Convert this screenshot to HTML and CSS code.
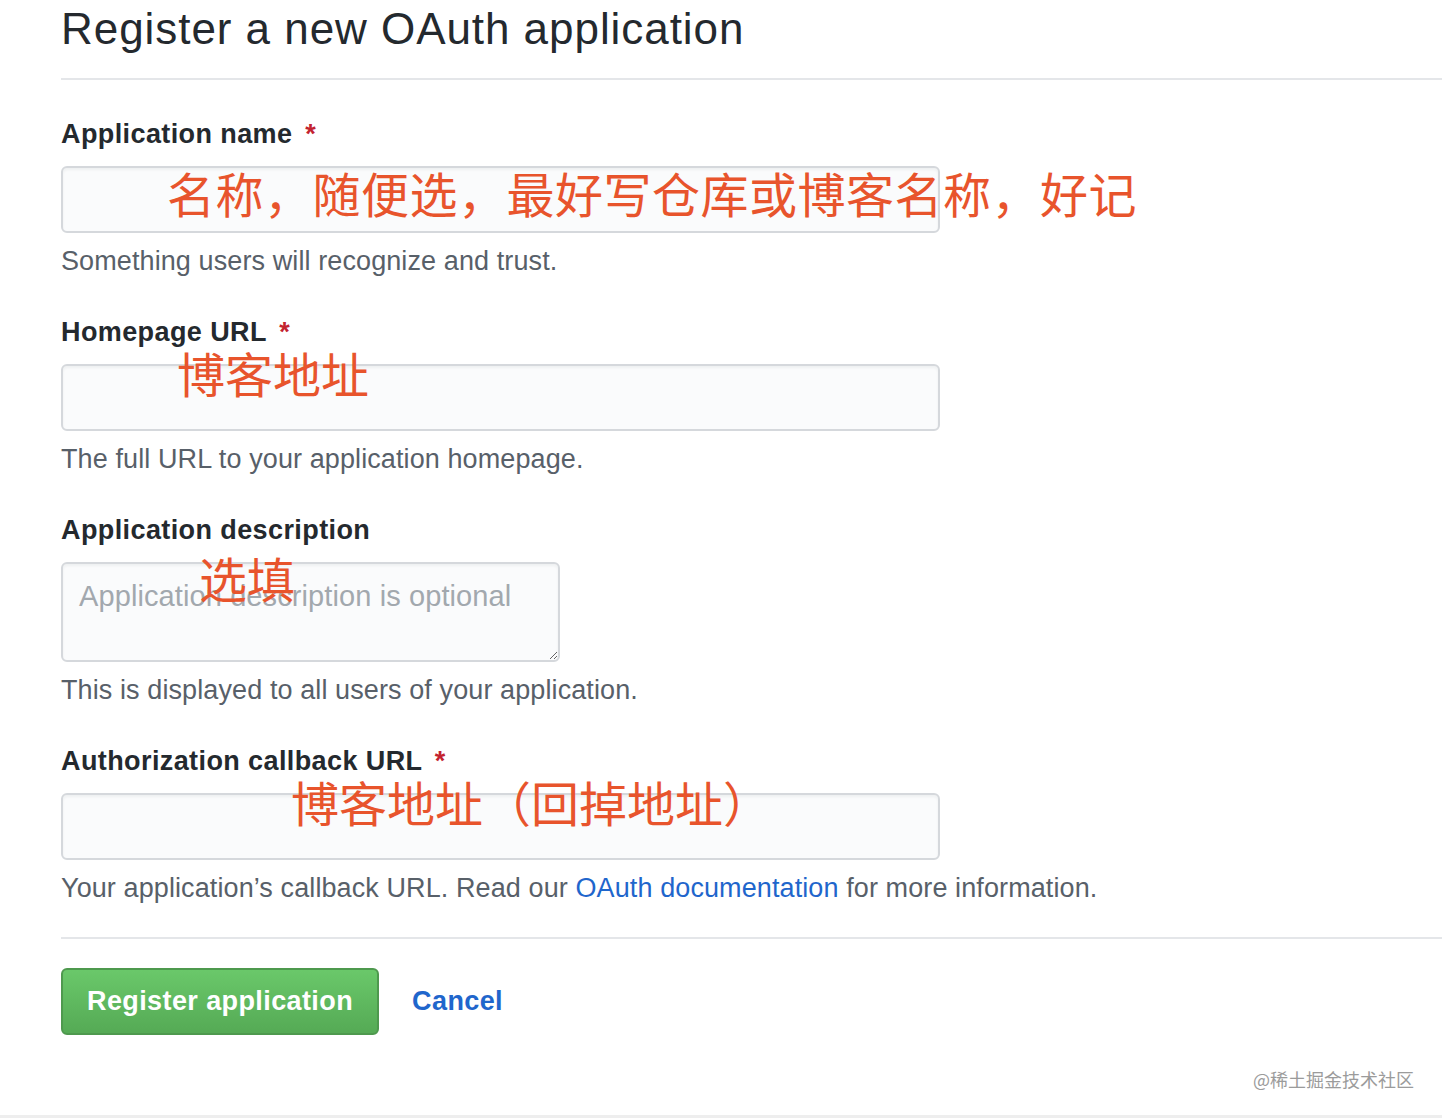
FILE: index.html
```html
<!DOCTYPE html>
<html lang="en">
<head>
<meta charset="utf-8">
<title>Register a new OAuth application</title>
<link rel="stylesheet" href="styles.css">
</head>
<body>
<div class="page">
  <main class="main">
    <h1 class="title">Register a new OAuth application</h1>
    <div class="rule"></div>
    <form class="form">
      <div class="field">
        <label class="label">Application name <span class="req">*</span></label>
        <div class="control">
          <input class="input" type="text">
          <span class="anno anno-1">名称，随便选，最好写仓库或博客名称，好记</span>
        </div>
        <p class="note">Something users will recognize and trust.</p>
      </div>
      <div class="field">
        <label class="label">Homepage URL <span class="req">*</span></label>
        <div class="control">
          <input class="input" type="text">
          <span class="anno anno-2">博客地址</span>
        </div>
        <p class="note">The full URL to your application homepage.</p>
      </div>
      <div class="field">
        <label class="label">Application description</label>
        <div class="control">
          <textarea class="textarea" placeholder="Application description is optional"></textarea>
          <span class="anno anno-3">选填</span>
        </div>
        <p class="note">This is displayed to all users of your application.</p>
      </div>
      <div class="field">
        <label class="label">Authorization callback URL <span class="req">*</span></label>
        <div class="control">
          <input class="input" type="text">
          <span class="anno anno-4">博客地址（回掉地址）</span>
        </div>
        <p class="note">Your application’s callback URL. Read our <a class="link" href="#">OAuth documentation</a> for more information.</p>
      </div>
      <div class="rule form-rule"></div>
      <div class="actions">
        <button class="btn" type="button">Register application</button>
        <a class="cancel" href="#">Cancel</a>
      </div>
    </form>
  </main>
  <div class="band"></div>
  <span class="watermark">@稀土掘金技术社区</span>
</div>
</body>
</html>
```

FILE: styles.css
```css
html, body {
  margin: 0;
  padding: 0;
  background: #ffffff;
}

body {
  font-family: "Liberation Sans", Arial, sans-serif;
  color: #24292e;
  overflow: hidden;
}

.page {
  position: relative;
  min-height: 1118px;
  box-sizing: border-box;
  display: flex;
  flex-direction: column;
}

.main {
  padding: 3px 0 0 61px;
}

.title {
  margin: 0;
  font-size: 44px;
  line-height: 52px;
  font-weight: 400;
  letter-spacing: 0.95px;
  color: #24292e;
}

.rule {
  height: 2px;
  background: #e4e6e9;
  margin-top: 23px;
}

.form {
  margin: 36px 0 0;
}

.field + .field {
  margin-top: 35px;
}

.label {
  display: block;
  font-size: 27px;
  line-height: 36px;
  font-weight: 700;
  letter-spacing: 0.4px;
  color: #24292e;
}

.req {
  color: #c3232f;
  margin-left: 5px;
}

.control {
  position: relative;
  margin-top: 14px;
  width: 879px;
  height: 67px;
}

.field:nth-child(3) .control {
  width: 499px;
  height: 100px;
}

.input,
.textarea {
  display: block;
  box-sizing: border-box;
  border: 2px solid #d5d8dc;
  border-radius: 6px;
  background: #fafbfc;
  box-shadow: inset 0 2px 3px rgba(27, 31, 35, 0.05);
  margin: 0;
  outline: none;
}

.input {
  width: 879px;
  height: 67px;
}

.textarea {
  width: 499px;
  height: 100px;
  padding: 14px 16px;
  font-family: "Liberation Sans", Arial, sans-serif;
  font-size: 29px;
  line-height: 36px;
  letter-spacing: 0.1px;
  color: #24292e;
  resize: vertical;
}

.textarea::placeholder {
  color: #a2a8ae;
}

.note {
  margin: 10px 0 0;
  font-size: 27px;
  line-height: 36px;
  letter-spacing: 0.1px;
  color: #586069;
}

.link {
  color: #1f66cc;
  text-decoration: none;
}

.anno {
  position: absolute;
  white-space: nowrap;
  font-family: "Noto Sans CJK SC", "Noto Sans", sans-serif;
  font-size: 48px;
  line-height: 48px;
  color: #e8542c;
  pointer-events: none;
}

.anno-1 {
  left: 106px;
  top: 2px;
  letter-spacing: 0.5px;
}

.anno-2 {
  left: 116px;
  top: -16px;
}

.anno-3 {
  left: 138px;
  top: -9px;
}

.anno-4 {
  left: 230px;
  top: -16px;
}

.form-rule {
  margin-top: 31px;
}

.actions {
  margin-top: 29px;
  display: flex;
  align-items: center;
  gap: 33px;
}

.btn {
  box-sizing: border-box;
  height: 67px;
  padding: 0 24px;
  border: 2px solid #4e994e;
  border-radius: 6px;
  background: linear-gradient(180deg, #6ac86a 0%, #55aa55 100%);
  color: #ffffff;
  font-family: "Liberation Sans", Arial, sans-serif;
  font-size: 27px;
  font-weight: 700;
  letter-spacing: 0.4px;
  cursor: pointer;
}

.cancel {
  color: #1f66cc;
  font-size: 27px;
  font-weight: 700;
  letter-spacing: 0.4px;
  text-decoration: none;
}

.band {
  margin-top: auto;
  height: 3px;
  background: #eeeeee;
}

.watermark {
  position: absolute;
  right: 28px;
  bottom: 27px;
  font-family: "Noto Sans CJK SC", sans-serif;
  font-size: 18px;
  line-height: 24px;
  color: #9b9b9b;
}
```
